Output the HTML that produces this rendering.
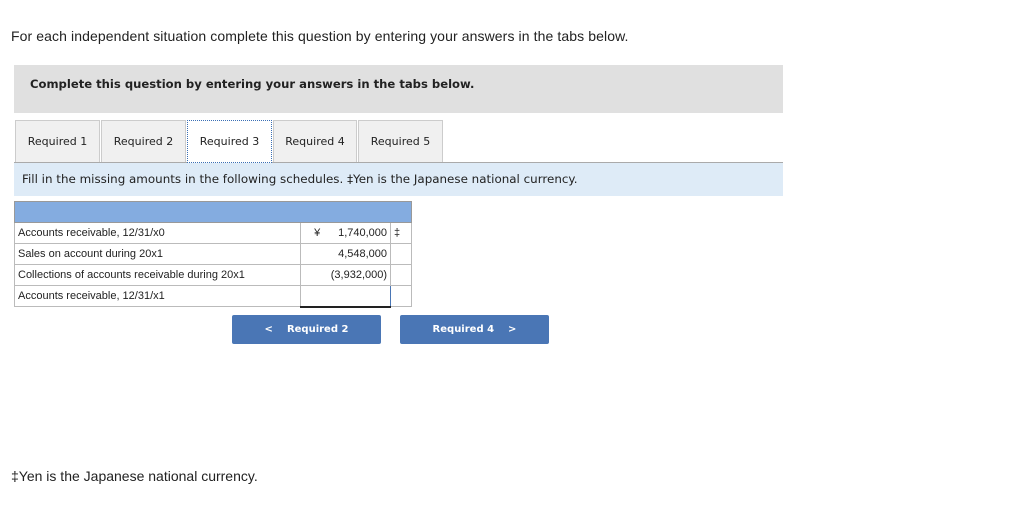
<!DOCTYPE html>
<html><head><style>
*{margin:0;padding:0;box-sizing:border-box}
body{width:1024px;height:520px;background:#fff;font-family:"Liberation Sans","DejaVu Sans",sans-serif;position:relative;color:#222}
.a{position:absolute}
.tab{position:absolute;top:120px;height:42px;background:#f0f0f0;border:1px solid #ccc;border-bottom:none;font-family:"DejaVu Sans",sans-serif;font-size:11px;display:flex;align-items:center;justify-content:center;color:#222}
td{border:1px solid #bbb;height:21px;font-size:11px;padding:0 3px}
.btn{position:absolute;top:315px;height:29px;background:#4a76b5;color:#fff;font-family:"DejaVu Sans",sans-serif;font-weight:bold;font-size:10px;display:flex;align-items:center;justify-content:center;border-radius:2px}
</style></head><body>
<div class="a" style="left:11px;top:28px;font-size:14px;letter-spacing:0.1px">For each independent situation complete this question by entering your answers in the tabs below.</div>
<div class="a" style="left:14px;top:65px;width:769px;height:48px;background:#e0e0e0"></div>
<div class="a" style="left:30px;top:77px;font-family:'DejaVu Sans',sans-serif;font-weight:bold;font-size:11.6px">Complete this question by entering your answers in the tabs below.</div>
<div class="tab" style="left:15px;width:85px">Required 1</div>
<div class="tab" style="left:101px;width:85px">Required 2</div>
<div class="tab" style="left:187px;width:85px;background:#fff;border:1px dotted #3a6fb5;height:43px;z-index:2">Required 3</div>
<div class="tab" style="left:273px;width:84px">Required 4</div>
<div class="tab" style="left:358px;width:85px">Required 5</div>
<div class="a" style="left:14px;top:162px;width:769px;height:1px;background:#aaa"></div>
<div class="a" style="left:14px;top:163px;width:769px;height:33px;background:#deebf7"></div>
<div class="a" style="left:22px;top:172px;font-family:'DejaVu Sans',sans-serif;font-size:11.9px">Fill in the missing amounts in the following schedules. ‡Yen is the Japanese national currency.</div>
<table class="a" style="left:14px;top:201px;border-collapse:collapse;width:398px">
<tr><td colspan="3" style="background:#84ace0;border-color:#999"></td></tr>
<tr><td style="width:287px">Accounts receivable, 12/31/x0</td><td style="width:90px;text-align:right"><span style="float:left;padding-left:10px">¥</span>1,740,000</td><td style="width:21px">‡</td></tr>
<tr><td>Sales on account during 20x1</td><td style="text-align:right">4,548,000</td><td></td></tr>
<tr><td>Collections of accounts receivable during 20x1</td><td style="text-align:right">(3,932,000)</td><td></td></tr>
<tr><td>Accounts receivable, 12/31/x1</td><td style="border:1px solid #4a76b5;border-bottom:2px solid #222"></td><td></td></tr>
</table>
<div class="btn" style="left:232px;width:149px"><span style="margin-right:14px">&lt;</span>Required 2</div>
<div class="btn" style="left:400px;width:149px">Required 4<span style="margin-left:14px">&gt;</span></div>
<div class="a" style="left:11px;top:468px;font-size:14px">‡Yen is the Japanese national currency.</div>
</body></html>
